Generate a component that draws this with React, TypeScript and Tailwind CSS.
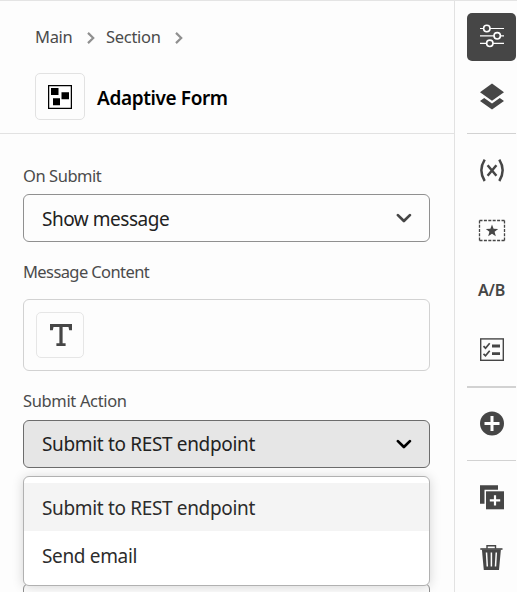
import type { ReactNode } from "react";

function Chevron({ className, stroke }: { className: string; stroke: number }) {
  return (
    <svg viewBox="0 0 16 10" className={className} fill="none" stroke="currentColor" strokeWidth={stroke} strokeLinecap="round" strokeLinejoin="round">
      <path d="M1.9 2.1 7.9 8 13.9 2.1" />
    </svg>
  );
}

function Crumb({ children, className }: { children: ReactNode; className: string }) {
  return (
    <span className="flex items-center">
      <span className={`whitespace-nowrap text-[16.5px] leading-6 tracking-[-0.3px] text-[#4b4b4b] ${className}`}>{children}</span>
      <svg viewBox="0 0 8 12" className="mt-0.5 h-3 w-2 shrink-0 text-[#909090]" fill="none" stroke="currentColor" strokeWidth="2.2">
        <path d="M1 .9 6.2 6 1 11.1" />
      </svg>
    </span>
  );
}

function Label({ children, className }: { children: ReactNode; className: string }) {
  return <div className={`h-6 whitespace-nowrap text-[16.5px] leading-6 text-[#4b4b4b] ${className}`}>{children}</div>;
}

function Slot({ className, children }: { className: string; children: ReactNode }) {
  return <div className={`flex w-full items-center justify-center ${className}`}>{children}</div>;
}

function Rail() {
  return (
    <aside className="flex w-[62px] shrink-0 flex-col pl-3 pr-px pt-3 text-[#464646]">
      <Slot className="h-12 rounded-[5px] bg-[#464646]">
        <svg width="26" height="26" viewBox="0 0 26 26" fill="none" stroke="#fff" strokeWidth="1.2">
          <path d="M1 4.5h24M1 11.8h24M1 19.3h24" />
          <g fill="#464646" strokeWidth="1.6">
            <circle cx="7.8" cy="4.5" r="3.2" />
            <circle cx="18.2" cy="11.8" r="3.2" />
            <circle cx="10.8" cy="19.3" r="3.2" />
          </g>
        </svg>
      </Slot>
      <Slot className="mt-3 h-12">
        <svg width="26" height="28" viewBox="0 0 26 28" fill="currentColor">
          <path d="M13 .5 25 9.2 13 17.8 1 9.2z" />
          <path d="m1 18 4.2-3L13 20.6l7.8-5.6 4.2 3-12 8.6z" />
        </svg>
      </Slot>
      <div className="mt-3 h-px bg-[#d2d2d2]" />
      <Slot className="mt-3 h-12">
        <svg width="26" height="26" viewBox="0 0 26 26" fill="none" stroke="currentColor">
          <path d="M5.7 2.6Q-1 13.3 5.7 24M20.3 2.6q6.7 10.7 0 21.4" strokeWidth="2.5" />
          <path d="m8.6 8.2 8.8 10.6M17.4 8.2 8.6 18.8" strokeWidth="2.5" />
        </svg>
      </Slot>
      <Slot className="mt-3 h-12">
        <svg width="28" height="24" viewBox="0 0 28 24" fill="none">
          <path d="M1.5 2.5h25M1.5 22.5h25" stroke="currentColor" strokeWidth="1.3" strokeDasharray="3 1.4" />
          <path d="M1.5 2.5v20M26.5 2.5v20" stroke="currentColor" strokeWidth="1.3" strokeDasharray="3 1.25" />
          <path d="m14 6.4 1.6 4.3 4.6.2-3.6 2.9 1.2 4.4-3.8-2.5-3.8 2.5 1.2-4.4-3.6-2.9 4.6-.2z" fill="currentColor" />
        </svg>
      </Slot>
      <Slot className="mt-3 h-12">
        <span className="text-[16px] font-semibold leading-6 tracking-[-0.3px]">A/B</span>
      </Slot>
      <Slot className="mt-3 h-12">
        <svg width="24" height="24" viewBox="0 0 24 24" fill="none" stroke="currentColor">
          <rect x=".7" y=".9" width="22.6" height="21.4" strokeWidth="1.4" />
          <path d="m3.5 8.2 2 2 4.2-5M3.5 15.8l2 2 4.2-5" strokeWidth="1.7" />
          <path d="M12 8h8M12 15.6h8" strokeWidth="2.9" />
        </svg>
      </Slot>
      <div className="mt-3 h-0.5 bg-[#d2d2d2]" />
      <Slot className="mt-3 h-12">
        <svg width="24" height="24" viewBox="0 0 24 24" className="overflow-visible">
          <circle cx="12" cy="11.5" r="12" fill="currentColor" />
          <path d="M12 4v15M4.5 11.5h15" stroke="#fff" strokeWidth="3" />
        </svg>
      </Slot>
      <div className="mt-3 h-px bg-[#d2d2d2]" />
      <Slot className="mt-3 h-12">
        <svg width="24" height="26" viewBox="0 0 24 26" fill="currentColor">
          <path d="M0 1.2h18v4.5H4.5v14H0z" />
          <path d="M6 7.3h18v18H6z" />
          <path d="M15 11.2v10.4M9.8 16.4h10.4" stroke="#fff" strokeWidth="2.2" />
        </svg>
      </Slot>
      <Slot className="mt-3 h-12">
        <svg width="24" height="26" viewBox="0 0 24 26" fill="none" stroke="currentColor">
          <path d="M7 4.7V1.8h8.5v2.9" strokeWidth="1.4" />
          <path d="M.3 5h22.2" strokeWidth="1.6" />
          <path d="M1.9 5.5h19L19 26H3.8z" fill="currentColor" stroke="none" />
          <path d="m6.5 8.5.8 14M11.4 8.5v14M16.3 8.5l-.8 14" stroke="#fdfdfd" strokeWidth="1.5" />
        </svg>
      </Slot>
    </aside>
  );
}

export default function App() {
  return (
    <div className="flex h-[592px] w-[517px] overflow-hidden border-t border-[#e4e4e4] bg-[#fdfdfd] font-['Noto_Sans','Open_Sans',sans-serif]">
      <main className="flex w-[455px] shrink-0 flex-col border-r border-[#e2e2e2]">
        <header className="h-[133px] shrink-0 border-b border-[#e2e2e2] pl-[35px] pt-6">
          <nav className="flex">
            <Crumb className="w-[52px]">Main</Crumb>
            <Crumb className="ml-[11px] w-[69px]">Section</Crumb>
          </nav>
          <div className="mt-6 flex items-center">
            <div className="flex h-[47px] w-[50px] items-center justify-center rounded-[5px] border border-[#e2e2e2]">
              <svg width="24" height="24" viewBox="0 0 24 24">
                <rect x=".6" y=".6" width="22.8" height="22.8" fill="#fff" stroke="#000" strokeWidth="1.3" />
                <path d="M3 3h7.5v7H3zM13.5 7.3H21v7h-7.5zM5 13.3h7v7H5z" />
              </svg>
            </div>
            <h1 className="ml-3 whitespace-nowrap pt-0.5 text-[19px] font-semibold leading-6 tracking-[-0.38px] text-black">Adaptive Form</h1>
          </div>
        </header>
        <section className="flex flex-col pl-[23px] pr-6 pt-[30px]">
          <Label className="tracking-[-0.45px]">On Submit</Label>
          <div className="mt-1.5 flex h-12 items-center rounded-md border border-[#909090] px-[18px]">
            <span className="pt-0.5 text-[19px] tracking-[-0.48px] text-[#222]">Show message</span>
            <Chevron className="ml-auto mr-[-1px] h-2.5 w-4 text-[#464646]" stroke={2.7} />
          </div>
          <Label className="mt-[18px] tracking-[-0.6px]">Message Content</Label>
          <div className="mt-[15px] flex h-[72px] items-center rounded-md border border-[#d2d2d2] pl-3">
            <div className="flex h-[46px] w-12 items-center justify-center rounded-[5px] border border-[#e6e6e6]">
              <svg width="24" height="24" viewBox="0 0 24 24" fill="#464646">
                <path d="M2 1h22v6.3h-2.8L20.5 4h-5.9v16.3h3V23H8.4v-2.7h3V4H5.5l-.7 3.3H2z" />
              </svg>
            </div>
          </div>
          <Label className="mt-[18px] tracking-[-0.35px]">Submit Action</Label>
          <div className="relative mt-[7px]">
            <div className="flex h-12 items-center rounded-md border border-[#6d6d6d] bg-[#e6e6e6] px-[18px]">
              <span className="text-[19px] tracking-[-0.34px] text-[#222]">Submit to REST endpoint</span>
              <Chevron className="ml-auto mr-[-1px] h-2.5 w-4 text-black" stroke={2.7} />
            </div>
            <ul className="absolute inset-x-0 top-14 z-10 h-[110px] rounded-md border border-[#b1b1b1] bg-white pt-1.5 text-[19px] leading-6 tracking-[-0.34px] text-[#2c2c2c] shadow-[0_1px_12px_rgba(0,0,0,0.16)]">
              <li className="flex h-12 items-center bg-[#f4f4f4] pl-[18px] pt-0.5">Submit to REST endpoint</li>
              <li className="flex h-12 items-center pl-[18px] pt-0.5">Send email</li>
            </ul>
          </div>
          <div className="mt-[115px] h-12 shrink-0 rounded-md border border-[#909090]" />
        </section>
      </main>
      <Rail />
    </div>
  );
}
